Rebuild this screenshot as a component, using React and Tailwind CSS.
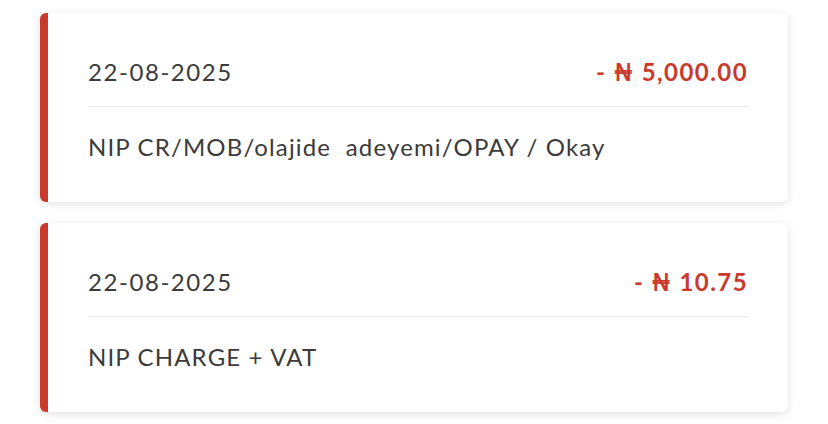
import React from 'react';

const transactions = [
  { date: '22-08-2025', amount: '- ₦ 5,000.00', narration: 'NIP CR/MOB/olajide  adeyemi/OPAY / Okay' },
  { date: '22-08-2025', amount: '- ₦ 10.75', narration: 'NIP CHARGE + VAT' },
];

export default function App() {
  return (
    <div className="min-h-screen bg-white px-10 pt-[13px] flex flex-col gap-[21px]" style={{ fontFamily: 'Lato, "Open Sans", sans-serif' }}>
      {transactions.map((t, i) => (
        <div key={i} className="h-[189px] bg-white rounded-md border-l-8 border-[#c93a2c] shadow-[0_2px_8px_rgba(0,0,0,0.12)] pl-10 pr-10 flex flex-col">
          <div className="h-[94px] flex items-center justify-between border-b border-[#e8e8e8] pt-[39px] pb-[15px]">
            <span className="text-[24px] tracking-[0.065em] text-[#3b3b3b]">{t.date}</span>
            <span className="text-[24px] font-bold tracking-[0.06em] text-[#c93a2c]">{t.amount}</span>
          </div>
          <div className="flex-1 flex items-center pb-[16px]">
            <span className="text-[24px] tracking-[0.048em] text-[#3b3b3b] whitespace-pre">{t.narration}</span>
          </div>
        </div>
      ))}
    </div>
  );
}
